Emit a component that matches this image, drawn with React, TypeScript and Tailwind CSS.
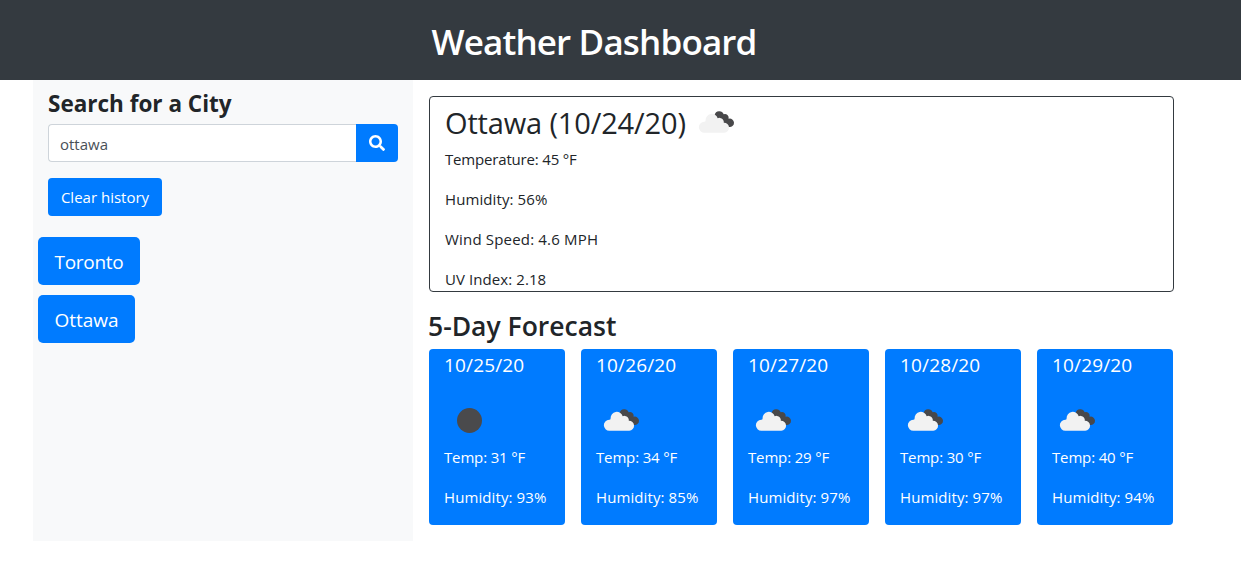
import { FaSearch } from 'react-icons/fa';

type Sky = 'clear' | 'clouds';

const forecast: { date: string; sky: Sky; temp: number; humidity: number }[] = [
  { date: '10/25/20', sky: 'clear', temp: 31, humidity: 93 },
  { date: '10/26/20', sky: 'clouds', temp: 34, humidity: 85 },
  { date: '10/27/20', sky: 'clouds', temp: 29, humidity: 97 },
  { date: '10/28/20', sky: 'clouds', temp: 30, humidity: 97 },
  { date: '10/29/20', sky: 'clouds', temp: 40, humidity: 94 },
];

function SkyIcon({ sky }: { sky: Sky }) {
  return (
    <svg viewBox="0 0 50 50" className="size-[50px] shrink-0">
      {sky === 'clear' ? (
        <circle cx="25.5" cy="25.5" r="12.5" fill="#4a4a4c" />
      ) : (
        <>
          <path
            d="M23.6 18a4.8 4.8 0 0 1 9.1-.7 3.8 3.8 0 0 1 4.9 4.500 4.200 4.200 0 1 1 .2 8.100L34 28l-3.5-4-4-1-1.500-2z"
            fill="#48484a"
          />
          <path
            d="M13.500 35.700a5.500 5.500 0 0 1-.3-11 1.300 1.300 0 0 0 1.400-1.300 6.200 6.200 0 0 1 12.100-2.200 4.400 4.400 0 0 1 6.100 4.500 5 5 0 0 1 .5 10z"
            fill="#f2f2f2"
          />
        </>
      )}
    </svg>
  );
}

export default function App() {
  return (
    <div className="min-h-[575px] bg-white font-['Open_Sans','Noto_Sans',sans-serif] text-[15px] leading-6 text-[#212529]">
      <header className="flex h-20 justify-center bg-[#343a40] pt-[18px] pr-[53px]">
        <h1 className="text-[35px] leading-[48px] font-semibold tracking-[-0.85px] whitespace-nowrap text-white">Weather Dashboard</h1>
      </header>
      <div className="flex pl-[33px]">
        <aside className="h-[461px] w-[380px] bg-[#f8f9fa]">
          <div className="px-[15px] pt-2">
            <h2 className="h-9 text-[22.5px] leading-8 font-bold">Search for a City</h2>
            <div className="flex h-[38px]">
              <input
                defaultValue="ottawa"
                aria-label="City"
                className="w-[308px] rounded-l border border-r-0 border-[#ced4da] bg-white pt-0.5 pr-3 pl-[11px] text-[#495057] outline-none"
              />
              <button aria-label="Search" className="flex w-[42px] items-center justify-center rounded-r bg-[#007bff] pr-px text-white">
                <FaSearch size={16} />
              </button>
            </div>
            <button className="mt-4 h-[38px] w-[114px] rounded bg-[#007bff] pb-px whitespace-nowrap text-white">Clear history</button>
          </div>
          <div className="mt-[21px] flex flex-col items-start gap-2.5 pl-[5px] text-[19px] text-white">
            <button className="h-12 w-[102px] rounded-[5px] bg-[#007bff] pt-0.5 tracking-[-0.3px]">Toronto</button>
            <button className="h-12 w-[97px] rounded-[5px] bg-[#007bff] pt-0.5">Ottawa</button>
          </div>
        </aside>
        <main className="ml-4 w-[745px] pt-4">
          <section className="h-[196px] rounded border border-[#343a40] px-[15px]">
            <div className="flex h-[50px]">
              <h2 className="w-[246px] text-[29px] leading-[52px] tracking-[-0.15px] whitespace-nowrap">Ottawa (10/24/20)</h2>
              <SkyIcon sky="clouds" />
            </div>
            <div className="flex flex-col gap-4">
              <p className="tracking-[-0.18px]">Temperature: 45 °F</p>
              <p className="tracking-[0.1px]">Humidity: 56%</p>
              <p className="tracking-[0.18px]">Wind Speed: 4.6 MPH</p>
              <p className="tracking-[0.08px]">UV Index: 2.18</p>
            </div>
          </section>
          <h2 className="mt-4 -ml-px h-[41px] text-[26.5px] leading-9 font-semibold">5-Day Forecast</h2>
          <div className="flex gap-4">
            {forecast.map((day) => (
              <article key={day.date} className="h-44 w-[136px] rounded bg-[#007bff] pl-[15px] whitespace-nowrap text-white">
                <h3 className="h-[46px] pt-1 text-[19px] leading-6 tracking-[0.15px]">{day.date}</h3>
                <SkyIcon sky={day.sky} />
                <p className="tracking-[-0.15px]">Temp: {day.temp} °F</p>
                <p className="mt-4 tracking-[0.1px]">Humidity: {day.humidity}%</p>
              </article>
            ))}
          </div>
        </main>
      </div>
    </div>
  );
}
